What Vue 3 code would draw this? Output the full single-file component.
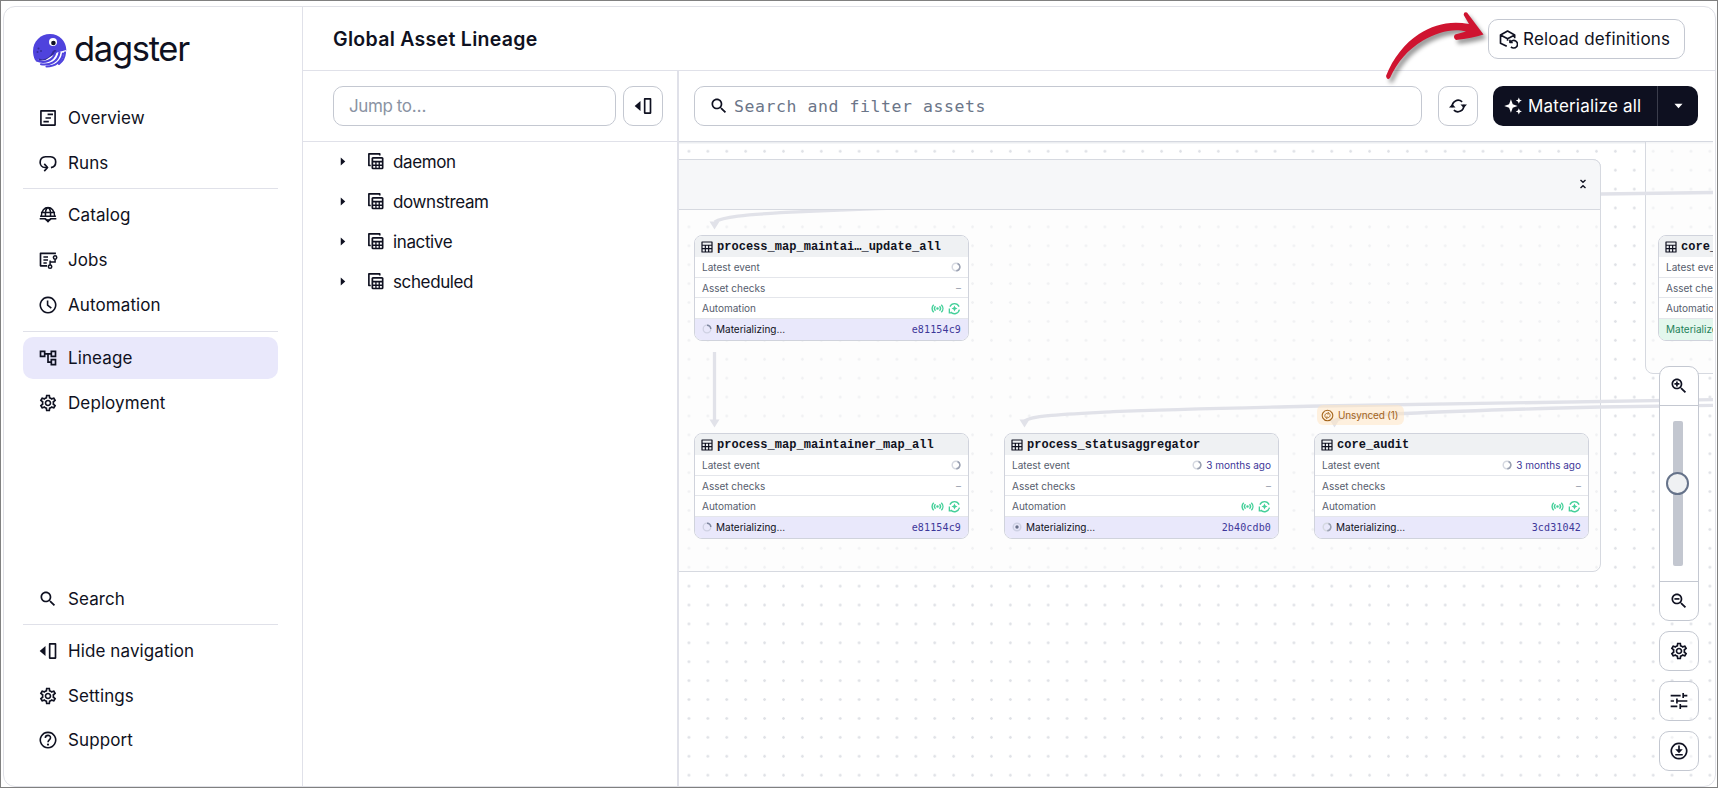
<template>
  <div class="window">
    <div class="app">
      <aside class="sidebar">
        <div class="logo">
          <svg class="logo-mark" viewBox="0 0 34 34">
            <path d="M17 0C26.500 0 33 7 33.300 16C33 20 31 23 28 25L2 26C.6 23 0 20 0 17C0 7.500 7.500 0 17 0Z" fill="#4f43dd" />
            <path d="M6 24.500C11 26.500 17 24 19.500 17.500C21 15.500 23 15.500 23.500 17L19 25L6 27Z" fill="#352c9b" />
            <path d="M1.500 25.500Q3 29.500 11 27L24 18.500L33.300 16L31 23L25 29L18 32L7 29Z" fill="#fff" />
            <g fill="none" stroke="#4f43dd" stroke-width="2.100" stroke-linecap="round">
              <path d="M3.500 26.500C11 29.500 20 27.500 22.500 18.500" />
              <path d="M8 30.200C17 31.500 25 28 26.500 18.500" />
              <path d="M13.500 32.500C22 32.500 29 27.500 30 19.500" />
              <path d="M26 29.800Q31.500 26 32 18.500" />
            </g>
            <circle cx="20" cy="8" r="4" fill="#fff" />
            <circle cx="20.400" cy="9" r="2.300" fill="#0e1020" />
            <g fill="#352c9b">
              <circle cx="5.500" cy="14.500" r="1" />
              <circle cx="4.500" cy="18" r="1" />
              <circle cx="8" cy="17" r="1" />
            </g>
          </svg>
          <span class="logo-text">dagster</span>
        </div>
        <nav class="nav">
          <template v-for="(group, i) in topNav" :key="i">
            <div v-if="i > 0" class="nav-line"></div>
            <div class="nav-group">
              <a v-for="item in group" :key="item.label" class="nav-item" :class="{ active: item.active }">
                <svg class="ico" viewBox="0 0 24 24" v-html="icons[item.icon]"></svg>
                <span>{{ item.label }}</span>
              </a>
            </div>
          </template>
        </nav>
        <nav class="nav nav-bottom">
          <template v-for="(group, i) in bottomNav" :key="i">
            <div v-if="i > 0" class="nav-line"></div>
            <div class="nav-group">
              <a v-for="item in group" :key="item.label" class="nav-item">
                <svg class="ico" viewBox="0 0 24 24" v-html="icons[item.icon]"></svg>
                <span>{{ item.label }}</span>
              </a>
            </div>
          </template>
        </nav>
      </aside>

      <main class="main">
        <header class="header">
          <h1>Global Asset Lineage</h1>
          <button class="btn reload">
            <svg class="ico" viewBox="0 0 24 24" v-html="icons.reload"></svg>
            <span>Reload definitions</span>
          </button>
        </header>

        <div class="content">
          <section class="tree">
            <div class="bar tree-bar">
              <input class="jump" placeholder="Jump to…" />
              <button class="btn square">
                <svg class="ico" viewBox="0 0 24 24" v-html="icons.hide"></svg>
              </button>
            </div>
            <ul class="tree-list">
              <li v-for="name in folders" :key="name">
                <svg class="caret" viewBox="0 0 6 10"><path d="M.500 .500L5.500 5L.500 9.500Z" fill="#0f1121" /></svg>
                <svg class="tree-ico" viewBox="0 0 24 24" v-html="icons.assetGroup"></svg>
                <span>{{ name }}</span>
              </li>
            </ul>
          </section>

          <section class="graph">
            <div class="bar graph-bar">
              <div class="search">
                <svg class="ico" viewBox="0 0 24 24" v-html="icons.search"></svg>
                <span>Search and filter assets</span>
              </div>
              <button class="btn square">
                <svg class="ico" viewBox="0 0 24 24" v-html="icons.sync"></svg>
              </button>
              <div class="materialize">
                <button class="mat-main">
                  <svg class="ico" viewBox="0 0 24 24" v-html="icons.sparkle"></svg>
                  <span>Materialize all</span>
                </button>
                <button class="mat-more">
                  <svg viewBox="0 0 10 6"><path d="M.500 .500H9.500L5 5.500Z" fill="#fff" /></svg>
                </button>
              </div>
            </div>

            <div class="canvas">
              <div class="group group-main"></div>
              <div class="group group-right"></div>
              <svg class="edges" viewBox="679 142 1034 645">
                <g fill="none" stroke="#e1e2e9" stroke-width="3.300">
                  <path d="M714.500 222C722 217 740 214.500 803 211.700C1000 203 1300 196 1601 194L1713 192.500" />
                  <path d="M714.500 352V421" />
                  <path d="M1024.500 421C1032 415.500 1060 414.500 1113 411.700C1180 409 1280 407 1320 406C1400 403.500 1500 402 1713 399.700" />
                  <path d="M1334.500 421C1340 416 1370 414.500 1404 413.500C1480 410 1560 408 1600 407L1713 405.300" />
                </g>
                <g fill="#e1e2e9">
                  <path d="M709.500 221.500H719.500L714.500 229.500Z" />
                  <path d="M709.500 419.500H719.500L714.500 427.500Z" />
                  <path d="M1019.500 419.500H1029.500L1024.500 427.500Z" />
                  <path d="M1329.500 419.500H1339.500L1334.500 427.500Z" />
                </g>
              </svg>
              <div class="group-head">
                <svg viewBox="0 0 8 10">
                  <path d="M1.500 1L4 3.200L6.500 1M1.500 9L4 6.800L6.500 9" fill="none" stroke="#0f1121" stroke-width="1.400" />
                </svg>
              </div>
              <div class="unsynced">
                <svg viewBox="0 0 24 24" v-html="icons.unsynced"></svg>
                <span>Unsynced (1)</span>
              </div>

              <div v-for="node in nodes" :key="node.id" class="node" :style="{ left: node.x + 'px', top: node.y + 'px' }">
                <div class="node-title">
                  <svg viewBox="0 0 24 24" v-html="icons.table"></svg>
                  <span>{{ node.name }}</span>
                </div>
                <div class="node-row">
                  <span>Latest event</span>
                  <span class="right">
                    <svg class="spin" viewBox="0 0 10 10" v-html="icons.spinRight"></svg>
                    <em v-if="node.time">{{ node.time }}</em>
                  </span>
                </div>
                <div class="node-row">
                  <span>Asset checks</span>
                  <span class="dash">–</span>
                </div>
                <div class="node-row">
                  <span>Automation</span>
                  <span class="right auto">
                    <svg viewBox="0 0 24 24" v-html="icons.sensor"></svg>
                    <svg viewBox="0 0 24 24" v-html="icons.autoMat"></svg>
                  </span>
                </div>
                <div v-if="node.done" class="node-foot done"><span>Materialized</span></div>
                <div v-else class="node-foot">
                  <svg class="spin" viewBox="0 0 10 10" v-html="icons[node.spin]"></svg>
                  <span>Materializing…</span>
                  <code>{{ node.run }}</code>
                </div>
              </div>

              <div class="tools">
                <div class="zoom">
                  <button class="zoom-btn"><svg class="ico" viewBox="0 0 24 24" v-html="icons.zoomIn"></svg></button>
                  <div class="zoom-slider">
                    <div class="track"><i class="knob"></i></div>
                  </div>
                  <button class="zoom-btn"><svg class="ico" viewBox="0 0 24 24" v-html="icons.zoomOut"></svg></button>
                </div>
                <button v-for="t in tools" :key="t" class="btn square tool">
                  <svg class="ico" viewBox="0 0 24 24" v-html="icons[t]"></svg>
                </button>
              </div>
            </div>
          </section>
        </div>
      </main>
    </div>

    <svg class="pointer-arrow" viewBox="0 0 120 80">
      <path d="M6 72C13 54 25 39 39 30C54 20.500 70 16.500 89 20L83.700 11Q83.500 7.500 87 8.500L103.500 30.500Q92 34 76 36Q72.500 33.500 75 30.500L86 27.500C74 24 58 27.500 43 36.500C28 45.500 17 58 10 74Q7 77 6 72Z" fill="#cf1430" />
    </svg>
  </div>
</template>

<script setup>
import { ref } from 'vue'

const line = (d, w = 2) => `<path d="${d}" fill="none" stroke="currentColor" stroke-width="${w}" stroke-linejoin="round"/>`
const solid = (d) => `<path d="${d}" fill="currentColor"/>`

const lens = 'M15.5 14h-.79l-.28-.27C15.41 12.59 16 11.110 16 9.500 16 5.910 13.090 3 9.500 3S3 5.910 3 9.500 5.910 16 9.500 16c1.610 0 3.090-.59 4.230-1.570l.27.28v.79l5 4.990L20.490 19l-4.990-5zm-6 0C7.010 14 5 11.990 5 9.500S7.010 5 9.500 5 14 7.010 14 9.500 11.990 14 9.500 14z'

const icons = {
  overview: line('M3.500 3.500H20.500V20.500H3.500Z') + line('M11.500 7.600H18M9 12H15.500M6.500 16.400H13', 2),
  runs: line('M15.500 17.500C23 16.500 23.500 5 15 4.500H9C.5 5 .5 17 8.500 17.400H11') + line('M7.500 13L11.500 17.400L7.500 21.700', 2),
  catalog: line('M4 13.500C4 -.5 20 -.5 20 13.500M2.500 13.500H21.500M3.500 9H20.500M9 13.500C8.500 8 10 4 12 3C14 4 15.500 8 15 13.500', 1.8) + line('M2 16.500H8.500L12 19.500L15.500 16.500H22', 2) + solid('M9.500 17H14.500L12 21.500Z'),
  jobs: line('M21.500 4H3V19H11') + line('M6.500 8.500H12M6.500 12H12M6.500 15.500H10.500', 1.800) + '<g fill="none" stroke="currentColor" stroke-width="1.800"><circle cx="20.500" cy="9" r="2"/><circle cx="14.500" cy="20" r="2"/><path d="M20.500 11V14.500H14.500V18M14.500 12.500V15"/></g>',
  automation: line('M12 2.800A9.200 9.200 0 1 1 11.990 2.800ZM11.500 6.500V12.200L16 15.800', 1.900),
  lineage: solid('M22 11V3h-7v3H9V3H2v8h7V8h2v10h4v3h7v-8h-7v3h-2V8h2v3h7zM7 9H4V5h3v4zm10 6h3v4h-3v-4zm0-10h3v4h-3V5z'),
  settings: solid('M19.430 12.980c.04-.32.07-.64.07-.98 0-.34-.03-.66-.07-.98l2.110-1.650c.19-.15.24-.42.12-.64l-2-3.460c-.09-.16-.26-.25-.44-.25-.06 0-.12.01-.17.03l-2.490 1c-.52-.4-1.080-.73-1.690-.98l-.38-2.650C14.460 2.180 14.250 2 14 2h-4c-.25 0-.46.18-.49.42l-.38 2.650c-.61.25-1.170.59-1.690.98l-2.490-1c-.06-.02-.12-.03-.18-.03-.17 0-.34.09-.43.25l-2 3.460c-.13.22-.07.49.12.64l2.110 1.650c-.04.32-.07.65-.07.98 0 .33.03.66.07.98l-2.110 1.650c-.19.15-.24.42-.12.64l2 3.460c.09.16.26.25.44.25.06 0 .12-.01.17-.03l2.490-1c.52.4 1.080.73 1.690.98l.38 2.650c.03.24.24.42.49.42h4c.25 0 .46-.18.49-.42l.38-2.650c.61-.25 1.170-.59 1.690-.98l2.490 1c.06.02.12.03.18.03.17 0 .34-.09.43-.25l2-3.460c.12-.22.07-.49-.12-.64l-2.110-1.650zm-1.980-1.710c.04.31.05.52.05.73 0 .21-.02.43-.05.73l-.14 1.130.89.7 1.080.84-.7 1.210-1.270-.51-1.040-.42-.9.68c-.43.32-.84.56-1.250.73l-1.060.43-.16 1.130-.2 1.350h-1.400l-.19-1.350-.16-1.130-1.060-.43c-.43-.18-.83-.41-1.230-.71l-.91-.7-1.060.43-1.270.51-.7-1.210 1.080-.84.89-.7-.14-1.130c-.03-.31-.05-.54-.05-.74s.02-.43.05-.73l.14-1.130-.89-.7-1.080-.84.7-1.210 1.270.51 1.040.42.9-.68c.43-.32.84-.56 1.250-.73l1.060-.43.16-1.130.2-1.350h1.390l.19 1.350.16 1.130 1.060.43c.43.18.83.41 1.230.71l.91.7 1.060-.43 1.270-.51.7 1.210-1.070.85-.89.7.14 1.130zM12 8c-2.210 0-4 1.790-4 4s1.790 4 4 4 4-1.790 4-4-1.790-4-4-4zm0 6c-1.100 0-2-.9-2-2s.9-2 2-2 2 .9 2 2-.9 2-2 2z'),
  search: solid(lens),
  zoomIn: solid(lens) + line('M9.500 6.500V12.500M6.500 9.500H12.500'),
  zoomOut: solid(lens) + line('M6.500 9.500H12.500'),
  hide: solid('M9 6V18L2 12Z') + line('M14 3.500H21V20.500H14Z'),
  help: line('M12 2.800A9.200 9.200 0 1 1 11.990 2.800Z', 1.900) + line('M8.800 9.500C9 5.300 15.300 5.500 15 9.500C14.800 11.800 12 12 12 14.600', 1.900) + '<circle cx="12" cy="17.500" r="1.300" fill="currentColor"/>',
  reload: line('M10.500 20.800L3 17V7.200L11.500 2.500L20 7.200V11M3 7.200L11.500 11.600L20 7.200M11.500 11.600V14', 2) + line('M14.300 13V16.200H17.700M14.800 16A4.600 4.600 0 1 1 15.500 21.500', 1.900),
  sync: line('M5 13.500C4.500 6 12 2.800 17 7M19 10.500C19.500 18 12 21.200 7 17', 2) + solid('M1.200 13.800H9L5.200 9.500ZM15 10.200H22.800L18.800 14.500Z'),
  sparkle: solid('M9.500 4L11.700 9.800L17.500 12L11.700 14.200L9.500 20L7.300 14.200L1.500 12L7.300 9.800ZM19 1.800L20.100 4.400L22.700 5.500L20.100 6.600L19 9.200L17.900 6.600L15.300 5.500L17.900 4.400ZM19 14.800L20.100 17.400L22.700 18.500L20.100 19.600L19 22.200L17.900 19.600L15.300 18.500L17.900 17.400Z'),
  assetGroup: line('M17 4.500V2.500H2.500V18H5', 2.200) + solid('M8 6.500H20A2 2 0 0 1 22 8.500V21A2 2 0 0 1 20 23H8A2 2 0 0 1 6 21V8.500A2 2 0 0 1 8 6.500Z') + '<path d="M8.300 9H19.800V11.500H8.300ZM8.300 14H11V16.500H8.300ZM12.800 14H15.400V16.500H12.800ZM17.200 14H19.800V16.500H17.200ZM8.300 18.500H11V21H8.300ZM12.800 18.500H15.400V21H12.800ZM17.200 18.500H19.800V21H17.200Z" fill="#fff"/>',
  table: line('M2 2H22V22H2ZM2 8.500H22M8.700 8.500V22M15.300 8.500V22M2 15.200H22', 2.400),
  sensor: '<g fill="none" stroke="#45d09a" stroke-width="2.600"><path d="M5 5C1 9 1 15 5 19M19 5C23 9 23 15 19 19M8.300 8C6 10.300 6 13.700 8.300 16M15.700 8C18 10.300 18 13.700 15.700 16"/></g><circle cx="12" cy="12" r="2.300" fill="#45d09a"/>',
  autoMat: '<g fill="none" stroke="#45d09a" stroke-width="2.500"><path d="M3.500 8.500A9.300 9.300 0 0 1 20.500 8.500M21 14A9.300 9.300 0 0 1 5 18.500M2.500 12V20H8"/></g><path d="M12 6.500L13.700 10.300L17.500 12L13.700 13.700L12 17.500L10.300 13.700L6.500 12L10.300 10.300Z" fill="#45d09a"/>',
  unsynced: line('M12 2.300A9.700 9.700 0 1 1 11.990 2.300Z', 2) + line('M12.500 5.500L15 8L12.500 10.500M14 8C6.500 7 6 13.500 8.500 15.500M11.500 18.500L9 16L11.500 13.500M10 16C17.500 17 18 10.500 15.500 8.500', 1.700),
  tune: line('M2 5.500H14M18 5.500H22M17 2.500V8.500M2 12H6M10 12H22M9.500 9V15M2 18.500H10M14 18.500H22M13.500 15.500V21.500'),
  download: line('M12 2.800A9.200 9.200 0 1 1 11.990 2.800ZM12 5.500V12M7.500 16.500H16.500') + solid('M7.500 10H16.500L12 14.600Z'),
  spinRight: '<circle cx="5" cy="5" r="3.800" fill="none" stroke="#d5d8e0" stroke-width="1.500"/><path d="M6.500 1.500A3.800 3.800 0 0 1 5.300 8.800" fill="none" stroke="#9aa1b2" stroke-width="1.500"/>',
  spinTop: '<circle cx="5" cy="5" r="3.800" fill="none" stroke="#cfd1e2" stroke-width="1.300"/><path d="M5 1.200A3.800 3.800 0 0 1 8.800 5" fill="none" stroke="#7f87a0" stroke-width="1.500"/>',
  spinDot: '<circle cx="5" cy="5" r="3.800" fill="none" stroke="#cdd0e3" stroke-width="1.500"/><circle cx="5" cy="5" r="1.700" fill="#687089"/>'
}

const topNav = ref([
  [{ label: 'Overview', icon: 'overview' }, { label: 'Runs', icon: 'runs' }],
  [{ label: 'Catalog', icon: 'catalog' }, { label: 'Jobs', icon: 'jobs' }, { label: 'Automation', icon: 'automation' }],
  [{ label: 'Lineage', icon: 'lineage', active: true }, { label: 'Deployment', icon: 'settings' }]
])

const bottomNav = ref([
  [{ label: 'Search', icon: 'search' }],
  [{ label: 'Hide navigation', icon: 'hide' }, { label: 'Settings', icon: 'settings' }, { label: 'Support', icon: 'help' }]
])

const folders = ref(['daemon', 'downstream', 'inactive', 'scheduled'])

const nodes = ref([
  { id: 1, name: 'process_map_maintai…_update_all', x: 15, y: 93, run: 'e81154c9', spin: 'spinTop' },
  { id: 2, name: 'process_map_maintainer_map_all', x: 15, y: 291, run: 'e81154c9', spin: 'spinTop' },
  { id: 3, name: 'process_statusaggregator', x: 325, y: 291, time: '3 months ago', run: '2b40cdb0', spin: 'spinDot' },
  { id: 4, name: 'core_audit', x: 635, y: 291, time: '3 months ago', run: '3cd31042', spin: 'spinRight' },
  { id: 5, name: 'core_', x: 979, y: 93, done: true }
])

const tools = ['settings', 'tune', 'download']
</script>

<style>
body {
  margin: 0;
  overflow: hidden;
}
</style>

<style scoped>
.window {
  box-sizing: border-box;
  position: relative;
  width: 1718px;
  height: 788px;
  padding: 5px 1px 0 2px;
  border: 1px solid #808080;
  background: #fff;
  color: #0f1121;
  font-family: Inter, "Liberation Sans", sans-serif;
  font-size: 17px;
  overflow: hidden;
}

button {
  padding: 0;
  border: 0;
  background: none;
  color: inherit;
  font: inherit;
  letter-spacing: 0.2px;
}

.app {
  box-sizing: border-box;
  display: flex;
  height: 781px;
  width: 1713px;
  border: 1px solid #e0e1e7;
  border-radius: 12px;
  overflow: hidden;
}

.ico {
  display: block;
  flex: none;
  width: 20px;
  height: 20px;
}

/* sidebar */
.sidebar {
  box-sizing: border-box;
  display: flex;
  flex-direction: column;
  flex: none;
  width: 299px;
  padding: 0 24px 25px 19px;
  border-right: 1px solid #e0e1e9;
}

.logo {
  box-sizing: border-box;
  display: flex;
  height: 90px;
  padding: 27px 0 0 10px;
}

.logo-mark {
  width: 34px;
  height: 34px;
}

.logo-text {
  margin: -6px 0 0 7px;
  font-size: 34.5px;
  line-height: 42px;
  letter-spacing: -1.3px;
}

.nav-bottom {
  margin-top: auto;
}

.nav-group {
  display: flex;
  flex-direction: column;
  gap: 3px;
}

.nav-bottom .nav-group {
  gap: 2.5px;
}

.nav-line {
  height: 1px;
  margin: 4px 0 5px;
  background: #e0e1e9;
}

.nav-group + .nav-line ~ .nav-line {
  margin-top: 5px;
}

.nav-item {
  display: flex;
  align-items: center;
  gap: 10px;
  height: 42px;
  padding-left: 15px;
  border-radius: 10px;
  letter-spacing: 0.1px;
}

.nav-item.active {
  background: #e9e8fb;
}

/* page header */
.main {
  flex: 1;
  display: flex;
  flex-direction: column;
  min-width: 0;
}

.header {
  box-sizing: border-box;
  display: flex;
  align-items: center;
  justify-content: space-between;
  flex: none;
  height: 64px;
  padding: 0 30px;
  border-bottom: 1px solid #e0e1e9;
}

.header h1 {
  margin: 0;
  font-size: 19.5px;
  font-weight: 600;
  letter-spacing: 0.3px;
}

.btn {
  box-sizing: border-box;
  display: flex;
  align-items: center;
  justify-content: center;
  flex: none;
  height: 40px;
  border: 1px solid #c4c8d1;
  border-radius: 10px;
}

.square {
  width: 40px;
}

.reload {
  justify-content: flex-start;
  width: 197px;
  gap: 5px;
  padding-left: 9px;
}

.content {
  flex: 1;
  display: flex;
  min-height: 0;
}

.bar {
  box-sizing: border-box;
  display: flex;
  align-items: center;
  flex: none;
  height: 71px;
}

/* asset tree */
.tree {
  flex: none;
  width: 374px;
  border-right: 2px solid #e0e1e9;
}

.tree-bar {
  gap: 7px;
  padding: 0 14px 0 30px;
  border-bottom: 1px solid #e0e1e9;
}

.jump {
  box-sizing: border-box;
  flex: 1;
  min-width: 0;
  height: 40px;
  padding: 0 15px;
  border: 1px solid #c4c8d1;
  border-radius: 10px;
  font: inherit;
  letter-spacing: -0.4px;
}

.jump::placeholder {
  color: #8a93a3;
}

.tree-list {
  margin: -1px 0 0;
  padding: 0 0 0 37px;
  list-style: none;
}

.tree-list li {
  display: flex;
  align-items: center;
  height: 40px;
  letter-spacing: -0.38px;
}

.tree-list span {
  padding-top: 1px;
}

.caret {
  width: 6px;
  height: 9px;
}

.tree-ico {
  width: 18px;
  height: 18px;
  margin: 0 8px 0 21px;
}

/* graph */
.graph {
  display: flex;
  flex-direction: column;
  width: 1034px;
}

.graph-bar {
  padding: 0 15px;
  border-bottom: 1px solid #d5d8e0;
}

.search {
  box-sizing: border-box;
  flex: 1;
  display: flex;
  align-items: center;
  gap: 5px;
  height: 40px;
  margin-right: 16px;
  padding-left: 14px;
  border: 1px solid #c4c8d1;
  border-radius: 10px;
}

.search span {
  color: #6b7588;
  font-family: "DejaVu Sans Mono", monospace;
  font-size: 16.5px;
  letter-spacing: 0.57px;
}

.materialize {
  display: flex;
  width: 205px;
  height: 40px;
  margin-left: 15px;
  border-radius: 10px;
  background: #0e1020;
  color: #fff;
  overflow: hidden;
}

.mat-main {
  display: flex;
  align-items: center;
  gap: 5px;
  width: 165px;
  padding-left: 10px;
  border-right: 1px solid #3b3d4c;
  white-space: nowrap;
}

.mat-more {
  flex: 1;
  display: flex;
  align-items: center;
  justify-content: center;
}

.mat-more svg {
  width: 9px;
  height: 6px;
}

.canvas {
  position: relative;
  flex: 1;
  background-image: radial-gradient(circle, #dfe1e6 1px, transparent 1.6px);
  background-size: 18.92px 18.92px;
  background-position: 0.5px -0.2px;
  box-shadow: inset 0 1.5px 0 #eceef1;
  overflow: hidden;
}

.group {
  box-sizing: border-box;
  position: absolute;
  border: 1px solid #d6d9e0;
  background: rgba(251, 251, 251, 0.6);
}

.group-main {
  left: -10px;
  top: 17px;
  width: 932px;
  height: 413px;
  border-radius: 8px;
}

.group-right {
  left: 966px;
  top: -20px;
  width: 200px;
  height: 252px;
  border-radius: 8px;
}

.edges {
  position: absolute;
  left: 0;
  top: 0;
  width: 1034px;
  height: 645px;
}

.group-head {
  box-sizing: border-box;
  position: absolute;
  left: -10px;
  top: 17px;
  display: flex;
  align-items: center;
  justify-content: flex-end;
  width: 932px;
  height: 51px;
  padding: 0 13px 2px 0;
  border: 1px solid #d6d9e0;
  border-radius: 8px 8px 0 0;
  background: #f6f7f9;
}

.group-head svg {
  width: 8px;
  height: 10px;
}

.unsynced {
  position: absolute;
  left: 638px;
  top: 263px;
  display: flex;
  align-items: center;
  gap: 4px;
  width: 83px;
  height: 20px;
  padding-left: 4px;
  border-radius: 6px;
  background: rgba(255, 230, 196, 0.55);
  color: #a4641a;
  font-size: 10px;
  letter-spacing: -0.15px;
  white-space: nowrap;
}

.unsynced svg {
  width: 13px;
  height: 13px;
}

.node {
  box-sizing: border-box;
  position: absolute;
  width: 275px;
  height: 106px;
  border: 1.5px solid #d0d3dc;
  border-radius: 8px;
  background: #fff;
  font-size: 10px;
  color: #565d6d;
  overflow: hidden;
}

.node-title {
  box-sizing: border-box;
  display: flex;
  align-items: center;
  gap: 4px;
  height: 21px;
  padding: 1px 0 0 6px;
  background: #eff1f3;
  color: #0f1121;
  font: 600 12px "Liberation Mono", monospace;
  letter-spacing: 0.02px;
  white-space: nowrap;
}

.node-title svg {
  width: 12px;
  height: 12px;
}

.node-row {
  box-sizing: border-box;
  display: flex;
  align-items: center;
  justify-content: space-between;
  height: 20.6px;
  padding: 0.5px 7px 0;
  border-bottom: 1px solid #e4e6eb;
}

.right {
  display: flex;
  align-items: center;
  gap: 4px;
}

.right em {
  color: #3d3799;
  font-style: normal;
}

.dash {
  color: #959cab;
}

.auto svg {
  width: 13px;
  height: 13px;
}

.spin {
  width: 10px;
  height: 10px;
}

.node-foot {
  display: flex;
  align-items: center;
  gap: 4px;
  height: 21px;
  padding: 0 7px;
  background: #e9e8fb;
  color: #0f1121;
}

.node-foot code {
  margin-left: auto;
  color: #3d3799;
  font-family: "DejaVu Sans Mono", monospace;
  font-size: 10px;
  letter-spacing: 0.14px;
}

.node-foot.done {
  background: #e3f7ed;
  color: #23825a;
}

/* zoom and view controls lie over the canvas */
.tools {
  position: absolute;
  right: 14px;
  top: 224px;
  display: flex;
  flex-direction: column;
  gap: 10px;
}

.tool {
  background: rgba(255, 255, 255, 0.5);
}

.zoom {
  box-sizing: border-box;
  width: 40px;
  height: 255px;
  border: 1px solid #c4c8d1;
  border-radius: 10px;
  background: #fff;
}

.zoom-btn {
  display: flex;
  align-items: center;
  justify-content: center;
  width: 38px;
  height: 38px;
}

.zoom-slider {
  box-sizing: border-box;
  height: 177px;
  padding: 15px 0 0 13px;
  border: solid #c4c8d1;
  border-width: 1px 0;
}

.track {
  position: relative;
  width: 10px;
  height: 145px;
  border-radius: 2px;
  background: #c3c7d0;
}

.knob {
  box-sizing: border-box;
  position: absolute;
  left: -7px;
  top: 50.5px;
  width: 23px;
  height: 23px;
  border: 2px solid #66738a;
  border-radius: 50%;
  background: #eff1f3;
}

.pointer-arrow {
  position: absolute;
  left: 1379px;
  top: 3px;
  width: 120px;
  height: 80px;
  filter: drop-shadow(3px 4px 2px rgba(0, 0, 0, 0.4));
  overflow: visible;
  pointer-events: none;
}
</style>
